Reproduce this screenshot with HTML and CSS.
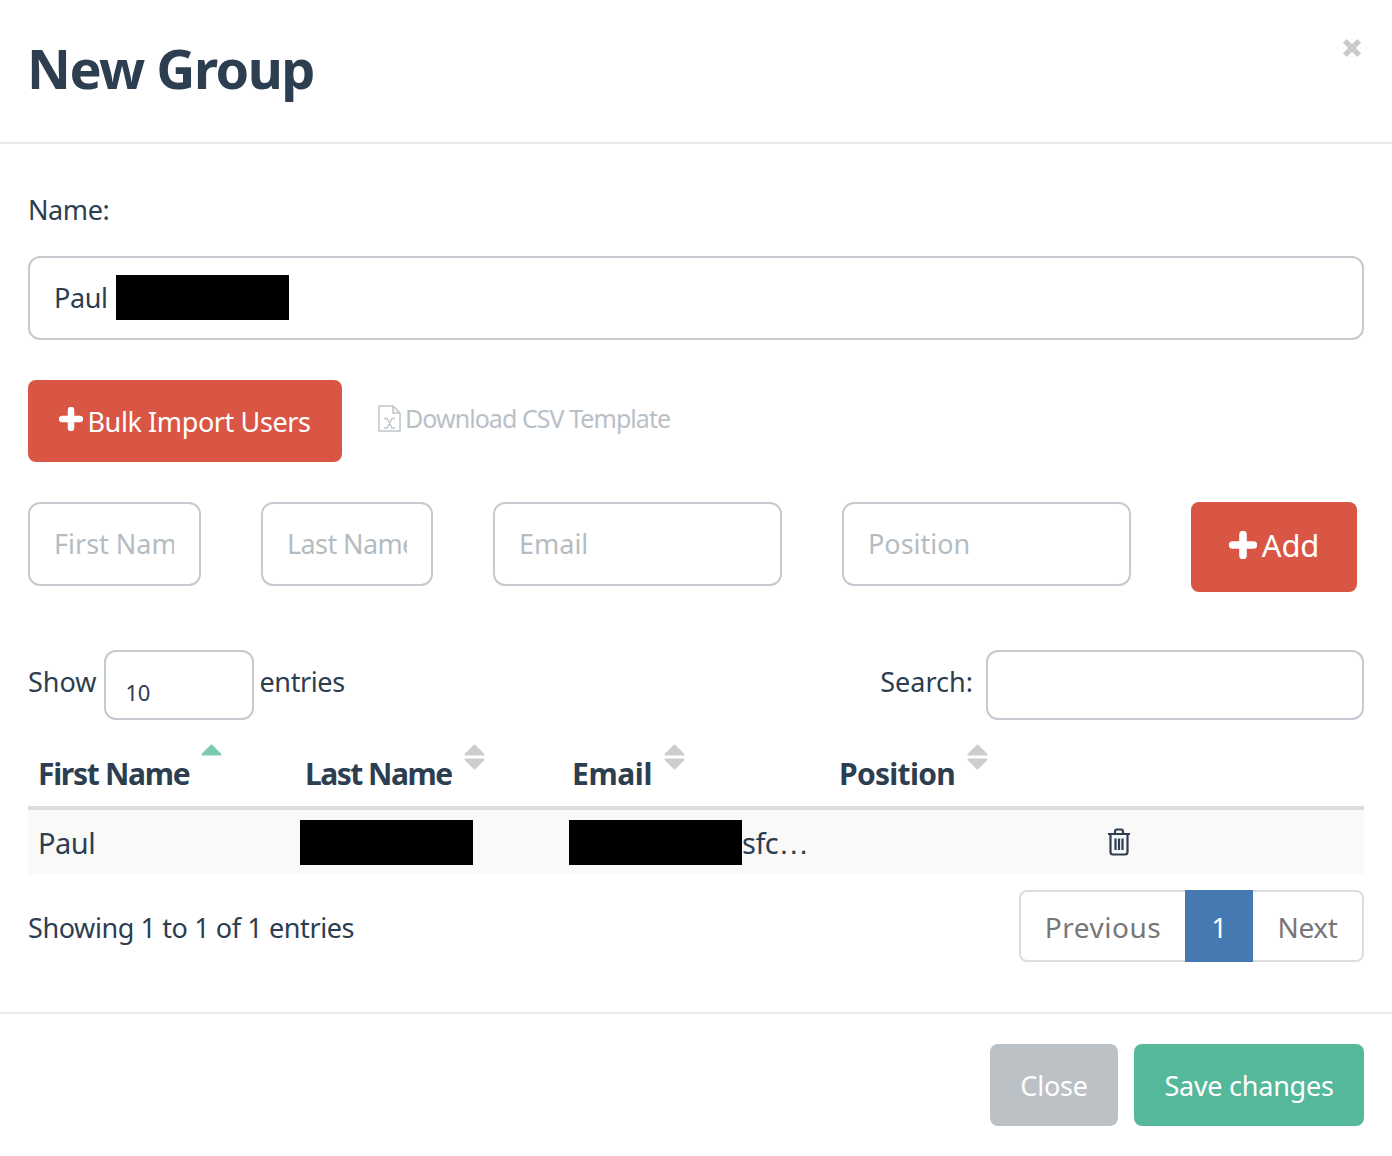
FILE: index.html
```html
<!DOCTYPE html>
<html lang="en">
<head>
<meta charset="utf-8">
<title>New Group</title>
<link rel="stylesheet" href="styles.css">
</head>
<body>
<div class="modal">
  <header class="modal-header">
    <h1 class="title">New Group</h1>
    <svg class="close-x" viewBox="0 0 20 20" width="22" height="22"><path d="M3.500 3.500 16.500 16.500M16.500 3.500 3.500 16.500"/></svg>
  </header>
  <main class="modal-body">
    <label class="name-label">Name:</label>
    <div class="name-field">
      <input class="field name-input" type="text" value="Paul">
      <span class="redact name-redact"></span>
    </div>
    <div class="import-row">
      <button class="btn btn-danger btn-import"><svg class="plus" viewBox="0 0 24 24" width="24" height="24"><path d="M12 3v18M3 12h18"/></svg>Bulk Import Users</button>
      <a class="csv-link"><svg class="file-icon" viewBox="0 0 23 27" width="23" height="27"><path d="M1 1h14l7 7v18H1zM15 1v7h7"/><path class="file-x" d="M6 13.500h3l5 9.500h3M6 23h3l5-9.500h3"/></svg>Download CSV Template</a>
    </div>
    <div class="add-row">
      <input class="field add-first" type="text" placeholder="First Name">
      <input class="field add-last" type="text" placeholder="Last Name">
      <input class="field add-email" type="text" placeholder="Email">
      <input class="field add-position" type="text" placeholder="Position">
      <button class="btn btn-danger btn-add"><svg class="plus" viewBox="0 0 24 24" width="24" height="24"><path d="M12 3v18M3 12h18"/></svg>Add</button>
    </div>
    <div class="table-controls">
      <div class="length">
        <span class="length-word">Show</span>
        <select class="field length-select"><option>10</option></select>
        <span>entries</span>
      </div>
      <div class="search">
        <span class="search-word">Search:</span>
        <input class="field search-input" type="text">
      </div>
    </div>
    <table class="data-table">
      <thead>
        <tr>
          <th class="col-first">First Name<svg class="sort" viewBox="0 0 21 26" width="21" height="26"><path class="asc" d="M10.500 1.500 19.500 10.500H1.500Z"/></svg></th>
          <th class="col-last">Last Name<svg class="sort" viewBox="0 0 21 26" width="21" height="26"><path d="M10.500 1.500 19.500 10.500H1.500Z"/><path d="M1.500 15.500H19.500L10.500 24.500Z"/></svg></th>
          <th class="col-email">Email<svg class="sort" viewBox="0 0 21 26" width="21" height="26"><path d="M10.500 1.500 19.500 10.500H1.500Z"/><path d="M1.500 15.500H19.500L10.500 24.500Z"/></svg></th>
          <th class="col-position">Position<svg class="sort" viewBox="0 0 21 26" width="21" height="26"><path d="M10.500 1.500 19.500 10.500H1.500Z"/><path d="M1.500 15.500H19.500L10.500 24.500Z"/></svg></th>
          <th></th>
        </tr>
      </thead>
      <tbody>
        <tr>
          <td>Paul</td>
          <td><span class="redact cell-redact"></span></td>
          <td><span class="redact cell-redact"></span>sfc<span class="ell">…</span></td>
          <td></td>
          <td><svg class="trash" viewBox="0 0 24 28" width="24" height="28"><path d="M1 6h22M8 6V3.500Q8 1.500 10 1.500h4q2 0 2 2V6M3.500 6v18q0 2.500 2.500 2.500h12q2.500 0 2.500-2.500V6M8.500 10.500v11.500M12 10.500v11.500M15.500 10.500v11.500"/></svg></td>
        </tr>
      </tbody>
    </table>
    <div class="table-footer">
      <div class="info">Showing 1 to 1 of 1 entries</div>
      <nav class="pagination">
        <a class="page page-prev">Previous</a>
        <a class="page page-current">1</a>
        <a class="page page-next">Next</a>
      </nav>
    </div>
  </main>
  <footer class="modal-footer">
    <button class="btn btn-close">Close</button>
    <button class="btn btn-save">Save changes</button>
  </footer>
</div>
</body>
</html>
```

FILE: styles.css
```css
* { box-sizing: border-box; }
html, body { margin: 0; padding: 0; background: #fff; }
body {
  font-family: "Noto Sans", "Open Sans", sans-serif;
  font-size: 27px;
  letter-spacing: -0.4px;
  color: #2c3e50;
}
.modal { width: 1392px; height: 1156px; display: flex; flex-direction: column; }
.modal-header {
  height: 144px;
  border-bottom: 2px solid #e7e9ea;
  padding: 0 28px;
  display: flex;
  justify-content: space-between;
}
.title {
  margin: 32px 0 0 -1px;
  font-size: 54px;
  line-height: 72px;
  font-weight: 700;
  letter-spacing: -1.5px;
}
.close-x { margin: 37px 1px 0 0; }
.close-x path { stroke: #cbcbcb; stroke-width: 5px; fill: none; }
.modal-body { height: 870px; padding: 46px 28px 0; border-bottom: 2px solid #e7e9ea; }
.name-label { display: block; line-height: 40px; }
.field {
  font: inherit;
  letter-spacing: inherit;
  color: #2c3e50;
  background: #fff;
  border: 2px solid #c4cacf;
  border-radius: 12px;
  outline: none;
}
.field::placeholder { color: #b4bcc2; opacity: 1; }
.name-field { position: relative; margin-top: 26px; }
.name-input { display: block; width: 100%; height: 84px; padding: 0 24px 2px; }
.redact { background: #000; display: inline-block; }
.name-redact { position: absolute; left: 88px; top: 19px; width: 173px; height: 45px; }
.import-row { display: flex; align-items: flex-start; margin-top: 40px; }
.btn {
  font: inherit;
  letter-spacing: -0.25px;
  border: 0;
  border-radius: 8px;
  color: #fff;
  cursor: pointer;
  padding: 0;
}
.btn-danger { background: #d95645; display: flex; align-items: center; justify-content: center; }
.plus { flex: none; margin: -4px 4px 0 0; }
.plus path { stroke: #fff; stroke-width: 6.500px; stroke-linecap: round; fill: none; }
.btn-import { width: 314px; height: 82px; letter-spacing: -0.4px; }
.csv-link {
  display: flex;
  align-items: center;
  gap: 4px;
  margin: 23px 0 0 36px;
  font-size: 25px;
  line-height: 30px;
  letter-spacing: -0.95px;
  color: #b9c0c6;
}
.file-icon path { fill: none; stroke: #bfc5ca; stroke-width: 1.500px; }
.file-icon .file-x { stroke-width: 1.300px; }
.add-row { display: flex; align-items: flex-start; margin-top: 40px; }
.add-row .field { height: 84px; padding: 0 24px 2px; letter-spacing: 0; }
.add-row .add-first { width: 173px; padding-right: 25px; letter-spacing: 0; }
.add-row .add-last { width: 172px; margin-left: 60px; letter-spacing: -0.6px; }
.add-email { width: 289px; margin-left: 60px; }
.add-position { width: 289px; margin-left: 60px; }
.btn-add { width: 166px; height: 90px; margin-left: 60px; padding-bottom: 4px; font-size: 31px; letter-spacing: -0.2px; }
.btn-add .plus { width: 28px; height: 28px; margin: 0 5px 0 0; }
.table-controls { display: flex; justify-content: space-between; margin-top: 58px; height: 70px; }
.length, .search { display: flex; align-items: flex-start; line-height: 64px; }
.length-word { letter-spacing: 0; }
.search-word { letter-spacing: 0; }
.length-select {
  appearance: none;
  width: 150px;
  height: 70px;
  margin: 0 6px 0 7px;
  padding: 8px 0 0 20px;
  font-size: 22px;
}
.search-input { width: 378px; height: 70px; margin-left: 13px; }
.data-table { width: 1336px; table-layout: fixed; border-collapse: collapse; margin-top: 10px; }
.data-table th, .data-table td { padding: 0 0 0 10px; text-align: left; white-space: nowrap; }
.data-table th:nth-child(-n+4), .data-table td:nth-child(-n+4) { width: 267px; }
.data-table th {
  height: 78px;
  border-bottom: 4px solid #ddd;
  font-weight: 700;
  font-size: 30px;
  padding-top: 2px;
}
.data-table .col-first { letter-spacing: -1.3px; }
.data-table .col-last { letter-spacing: -1.5px; }
.data-table .col-email { letter-spacing: -0.4px; }
.data-table .col-position { letter-spacing: -0.7px; }
.sort { margin-left: 12px; vertical-align: 15px; }
.sort path { fill: #cdcdcd; stroke: #cdcdcd; stroke-width: 2px; stroke-linejoin: round; }
.sort .asc { fill: #7ccab2; stroke: #7ccab2; }
.data-table tbody tr { background: #f9f9f9; height: 66px; }
.data-table td { font-size: 29px; letter-spacing: -0.5px; }
.cell-redact { width: 173px; height: 45px; margin-left: -5px; vertical-align: -11px; }
.data-table td:nth-child(3) .cell-redact { margin-left: -3px; }
.ell { font-family: "Liberation Sans", sans-serif; font-size: 31px; letter-spacing: 0; }
.trash { display: block; margin: -1px 0 0 1px; }
.trash path { fill: none; stroke: #2c3e50; stroke-width: 2.200px; }
.table-footer { display: flex; justify-content: space-between; align-items: flex-start; margin-top: 16px; }
.info { line-height: 76px; }
.pagination {
  display: flex;
  height: 72px;
  border: 2px solid #ddd;
  border-radius: 8px;
  line-height: 74px;
  font-size: 28px;
  color: #777;
}
.page { display: block; text-align: center; margin: -2px 0; }
.page-prev { width: 164px; letter-spacing: 0.5px; }
.page-current { width: 68px; background: #4679b2; color: #fff; }
.page-next { width: 109px; }
.modal-footer { display: flex; justify-content: flex-end; gap: 16px; padding: 30px 28px 0; }
.btn-close { width: 128px; height: 82px; background: #bbc1c5; }
.btn-save { width: 230px; height: 82px; background: #55b89b; }
```
